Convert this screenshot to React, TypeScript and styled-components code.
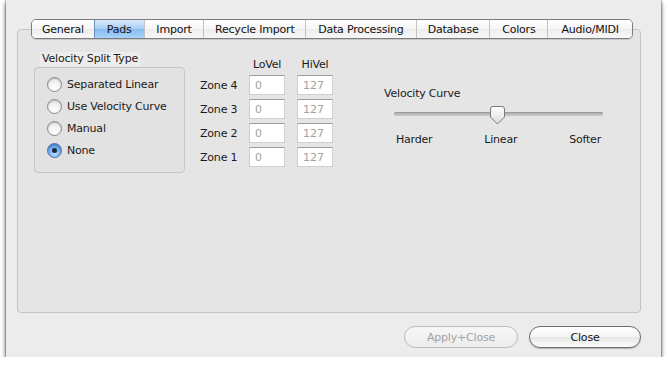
import styled, { createGlobalStyle } from "styled-components";

const GlobalStyle = createGlobalStyle`
    html, body {
        margin: 0;
        padding: 0;
        background: #ffffff;
    }
    body {
        font-family: "DejaVu Sans", "Liberation Sans", sans-serif;
        font-size: 11px;
        letter-spacing: -0.2px;
        color: #1a1a1a;
    }
`;

const Window = styled.div`
    margin-left: 6px;
    width: 655px;
    height: 357px;
    box-sizing: border-box;
    padding: 19px 20px 0 11px;
    background: #ececec;
    box-shadow: 0 3px 5px rgba(0, 0, 0, 0.6), 0 0 2px rgba(0, 0, 0, 0.7);
    display: flex;
    flex-direction: column;
`;

const TabBar = styled.div`
    display: flex;
    margin-left: 14px;
    margin-bottom: -10px;
    height: 20px;
    position: relative;
    z-index: 1;
    border: 1px solid #7d7d7d;
    border-radius: 5px;
    overflow: hidden;
    box-sizing: border-box;
    width: 602px;
    box-shadow: 0 1px 1px rgba(0, 0, 0, 0.15);
`;

const Tab = styled.div<{ $w: number; $active?: boolean }>`
    width: ${(p) => p.$w}px;
    display: flex;
    align-items: center;
    justify-content: center;
    font-size: 11px;
    color: #111;
    background: ${(p) =>
        p.$active
            ? "linear-gradient(#d8eafb 0%, #a9cdf3 50%, #86bbf0 51%, #a8d2fb 100%)"
            : "linear-gradient(#ffffff 0%, #f6f6f6 50%, #ededed 51%, #f7f7f7 100%)"};
    border-left: 1px solid ${(p) => (p.$active ? "#6e8fc0" : "#c2c2c2")};
    box-sizing: border-box;
    &:first-child {
        border-left: none;
    }
`;

const Panel = styled.div`
    height: 284px;
    box-sizing: border-box;
    border: 1px solid #c4c4c4;
    border-radius: 4px;
    background: #e5e5e5;
    padding: 22px 0 0 16px;
    display: flex;
    align-items: flex-start;
`;

const GroupColumn = styled.div`
    width: 151px;
    display: flex;
    flex-direction: column;
`;

const GroupTitle = styled.div`
    align-self: flex-start;
    margin-left: 6px;
    padding: 0 2px;
    height: 14px;
    line-height: 13px;
    background: #ededed;
`;

const GroupBox = styled.div`
    margin-top: 1px;
    height: 106px;
    box-sizing: border-box;
    border: 1px solid #c6c6c6;
    border-radius: 4px;
    background: #e2e2e2;
    padding: 9px 0 0 12px;
    display: flex;
    flex-direction: column;
    gap: 7px;
`;

const RadioRow = styled.label`
    display: flex;
    align-items: center;
    gap: 5px;
    height: 15px;
`;

const RadioCircle = styled.span<{ $on?: boolean }>`
    width: 15px;
    height: 15px;
    box-sizing: border-box;
    border-radius: 50%;
    border: 1px solid ${(p) => (p.$on ? "#4a6ea8" : "#8a8a8a")};
    background: ${(p) =>
        p.$on
            ? "radial-gradient(circle at 50% 75%, #bfe0ff 0%, #6aa8ea 55%, #3f7fd3 100%)"
            : "radial-gradient(circle at 50% 80%, #ffffff 0%, #f2f2f2 50%, #d4d4d4 100%)"};
    box-shadow: inset 0 1px 1px rgba(0, 0, 0, 0.15);
    display: flex;
    align-items: center;
    justify-content: center;
    &::after {
        content: "";
        display: ${(p) => (p.$on ? "block" : "none")};
        width: 5px;
        height: 5px;
        border-radius: 50%;
        background: #1b2a44;
    }
`;

const ZoneGrid = styled.div`
    margin-left: 15px;
    margin-top: 6px;
    display: grid;
    grid-template-columns: 37px 36px 36px;
    grid-template-rows: 13px repeat(4, 20px);
    column-gap: 12px;
    row-gap: 4px;
    align-items: center;
`;

const ColHead = styled.div`
    text-align: center;
`;

const ZoneLabel = styled.div`
    white-space: nowrap;
`;

const VelInput = styled.input`
    width: 36px;
    height: 20px;
    box-sizing: border-box;
    border: 1px solid #cfcfcf;
    border-top-color: #9c9c9c;
    background: #fff;
    padding: 0 0 0 5px;
    font-family: "DejaVu Sans", sans-serif;
    font-size: 11px;
    color: #a0a0a0;
    outline: none;
`;

const CurveSection = styled.div`
    margin-left: 51px;
    margin-top: 35px;
    width: 219px;
    display: flex;
    flex-direction: column;
`;

const CurveTitle = styled.div`
    height: 13px;
`;

const SliderWrap = styled.div`
    position: relative;
    margin: 7px 0 0 10px;
    width: 209px;
    height: 18px;
`;

const Track = styled.div`
    position: absolute;
    left: 0;
    right: 0;
    top: 5px;
    height: 4px;
    border-radius: 2px;
    background: linear-gradient(#a9a9a9, #c9c9c9);
    box-shadow: inset 0 1px 0 #9a9a9a;
`;

const Thumb = styled.svg`
    position: absolute;
    left: 96px;
    top: -1px;
`;

const TickLabels = styled.div`
    display: flex;
    justify-content: space-between;
    margin: 8px 0 0 12px;
    width: 205px;
`;

const ButtonRow = styled.div`
    display: flex;
    justify-content: flex-end;
    gap: 11px;
    margin-top: 13px;
`;

const PushButton = styled.button<{ $w: number }>`
    width: ${(p) => p.$w}px;
    height: 22px;
    border-radius: 11px;
    border: 1px solid #6f6f6f;
    background: linear-gradient(#ffffff 0%, #f4f4f4 50%, #e6e6e6 51%, #fbfbfb 100%);
    box-shadow: 0 1px 1px rgba(0, 0, 0, 0.25);
    font-family: "DejaVu Sans", sans-serif;
    font-size: 11px;
    letter-spacing: -0.2px;
    color: #111;
    padding: 0;
    &:disabled {
        border-color: #bdbdbd;
        color: #a2a2a2;
        background: linear-gradient(#f7f7f7, #ececec);
        box-shadow: none;
    }
`;

const tabs: [string, number][] = [
    ["General", 62],
    ["Pads", 50],
    ["Import", 60],
    ["Recycle Import", 102],
    ["Data Processing", 111],
    ["Database", 74],
    ["Colors", 58],
    ["Audio/MIDI", 85],
];

const splitTypes = ["Separated Linear", "Use Velocity Curve", "Manual", "None"];

function App() {
    return (
        <>
            <GlobalStyle />
            <Window>
                <TabBar>
                    {tabs.map(([name, w]) => (
                        <Tab key={name} $w={w} $active={name === "Pads"}>
                            {name}
                        </Tab>
                    ))}
                </TabBar>
                <Panel>
                    <GroupColumn>
                        <GroupTitle>Velocity Split Type</GroupTitle>
                        <GroupBox>
                            {splitTypes.map((t) => (
                                <RadioRow key={t}>
                                    <RadioCircle $on={t === "None"} />
                                    {t}
                                </RadioRow>
                            ))}
                        </GroupBox>
                    </GroupColumn>

                    <ZoneGrid>
                        <div />
                        <ColHead>LoVel</ColHead>
                        <ColHead>HiVel</ColHead>
                        {[4, 3, 2, 1].flatMap((z) => [
                            <ZoneLabel key={"l" + z}>Zone {z}</ZoneLabel>,
                            <VelInput key={"a" + z} defaultValue="0" disabled />,
                            <VelInput key={"b" + z} defaultValue="127" disabled />,
                        ])}
                    </ZoneGrid>

                    <CurveSection>
                        <CurveTitle>Velocity Curve</CurveTitle>
                        <SliderWrap>
                            <Track />
                            <Thumb width="15" height="19" viewBox="0 0 15 19">
                                <defs>
                                    <linearGradient id="tg" x1="0" y1="0" x2="0" y2="1">
                                        <stop offset="0" stopColor="#ffffff" />
                                        <stop offset="1" stopColor="#dcdcdc" />
                                    </linearGradient>
                                </defs>
                                <path
                                    d="M3 0.5 H12 Q14.5 0.5 14.5 3 V11 L7.5 18 L0.5 11 V3 Q0.5 0.5 3 0.5 Z"
                                    fill="url(#tg)"
                                    stroke="#7a7a7a"
                                    strokeWidth="1"
                                />
                            </Thumb>
                        </SliderWrap>
                        <TickLabels>
                            <span>Harder</span>
                            <span>Linear</span>
                            <span>Softer</span>
                        </TickLabels>
                    </CurveSection>
                </Panel>
                <ButtonRow>
                    <PushButton $w={114} disabled>
                        Apply+Close
                    </PushButton>
                    <PushButton $w={112}>Close</PushButton>
                </ButtonRow>
            </Window>
        </>
    );
}

export default App;
